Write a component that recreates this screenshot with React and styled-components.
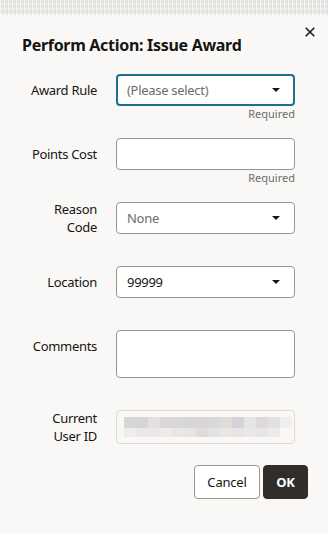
import React from "react";
import styled, { createGlobalStyle } from "styled-components";

const Global = createGlobalStyle`
  html, body { margin: 0; padding: 0; background: #f9f8f6; }
  body { font-family: "Noto Sans", "Open Sans", sans-serif; color: #161513; }
  * { box-sizing: border-box; }
`;

const Backdrop = styled.div`
  height: 15px;
  background-color: #e6e4e1;
  background-image:
    repeating-linear-gradient(90deg, rgba(255,255,255,0.55) 0 1px, transparent 1px 3px, rgba(0,0,0,0.03) 3px 4px),
    repeating-linear-gradient(0deg, rgba(255,255,255,0.35) 0 2px, transparent 2px 5px);
`;

const Dialog = styled.div`
  position: relative;
  background: #f9f8f6;
  padding: 20px 20px 20px 22px;
  min-height: 519px;
`;

const Title = styled.h1`
  margin: 0;
  font-size: 16px;
  line-height: 20px;
  font-weight: 700;
  letter-spacing: -0.3px;
  color: #161513;
`;

const CloseButton = styled.button`
  position: absolute;
  top: 5px;
  right: 6px;
  width: 24px;
  height: 24px;
  border: 0;
  background: transparent;
  padding: 0;
  display: flex;
  align-items: center;
  justify-content: center;
  cursor: pointer;
`;

const Form = styled.div`
  margin-top: 19px;
  display: grid;
  grid-template-columns: 75px 179px;
  column-gap: 19px;
  row-gap: 16px;
`;

const Label = styled.div`
  height: ${(p) => p.$h || 32}px;
  display: flex;
  align-items: center;
  justify-content: flex-end;
  text-align: right;
  font-size: 13px;
  line-height: 18px;
  letter-spacing: -0.3px;
  color: #161513;
`;

const Field = styled.div`
  display: flex;
  flex-direction: column;
`;

const Box = styled.div`
  height: ${(p) => p.$h || 32}px;
  border-radius: 4px;
  background: ${(p) => (p.$disabled ? "transparent" : "#fff")};
  border: ${(p) =>
    p.$focus ? "2px solid #1f6f8e" : p.$disabled ? "1px solid #dfdcd7" : "1px solid #9a9690"};
  display: flex;
  align-items: center;
  padding: 0 ${(p) => (p.$focus ? 13 : 14)}px 0 ${(p) => (p.$focus ? 9 : 10)}px;
  font-size: 13px;
  letter-spacing: -0.3px;
  color: ${(p) => (p.$placeholder ? "#6f6c68" : "#161513")};
`;

const Value = styled.span`
  flex: 1;
`;

const Helper = styled.div`
  height: 16px;
  font-size: 11px;
  line-height: 16px;
  text-align: right;
  color: #6f6c68;
`;

const Mosaic = styled.div`
  display: grid;
  grid-template-columns: repeat(14, 12px);
  grid-template-rows: 11px 9px;
  margin-left: -3px;
`;

const Cell = styled.span`
  background: ${(p) => p.$c};
`;

const Footer = styled.div`
  margin-top: 21px;
  display: flex;
  justify-content: flex-end;
  gap: 3px;
`;

const Button = styled.button`
  height: 34px;
  padding: 0 12px;
  min-width: ${(p) => (p.$primary ? 45 : 66)}px;
  border-radius: 4px;
  font-family: inherit;
  font-size: 13px;
  letter-spacing: -0.2px;
  font-weight: ${(p) => (p.$primary ? 700 : 400)};
  color: ${(p) => (p.$primary ? "#fff" : "#161513")};
  background: ${(p) => (p.$primary ? "#312d2a" : "#fff")};
  border: 1px solid ${(p) => (p.$primary ? "#312d2a" : "#9a9690")};
`;

const Caret = () => (
  <svg width="8" height="4" viewBox="0 0 8 4">
    <path d="M0 0 H8 L4 4 Z" fill="#161513" />
  </svg>
);

const CloseIcon = () => (
  <svg width="10" height="10" viewBox="0 0 10 10">
    <path d="M0.7 0.7 L9.3 9.3 M9.3 0.7 L0.7 9.3" stroke="#161513" strokeWidth="1.5" />
  </svg>
);

const row1 = ["#d8d6d3", "#d6d4d6", "#e3dfdf", "#dad6d5", "#d9d7d7", "#d6d6d5", "#d9d5d4", "#d8d8da", "#dfdcda", "#d6d3d8", "#e6e4e4", "#dcd9d8", "#e2e1e0", "#f0efee"];
const row2 = ["#efedec", "#e9e7e7", "#ebe7e6", "#ecebea", "#e8e7e6", "#e7e5e4", "#dddcda", "#e4e3e4", "#e8e7e6", "#e6e5e4", "#e9e7e8", "#e7e6e6", "#ecebea", "transparent"];

export default function App() {
  return (
    <>
      <Global />
      <Backdrop />
      <Dialog>
        <Title>Perform Action: Issue Award</Title>
        <CloseButton aria-label="Close">
          <CloseIcon />
        </CloseButton>
        <Form>
          <Label>Award Rule</Label>
          <Field>
            <Box $focus $placeholder>
              <Value>(Please select)</Value>
              <Caret />
            </Box>
            <Helper>Required</Helper>
          </Field>

          <Label>Points Cost</Label>
          <Field>
            <Box />
            <Helper>Required</Helper>
          </Field>

          <Label>Reason<br />Code</Label>
          <Field>
            <Box $placeholder>
              <Value>None</Value>
              <Caret />
            </Box>
            <Helper />
          </Field>

          <Label>Location</Label>
          <Field>
            <Box>
              <Value>99999</Value>
              <Caret />
            </Box>
            <Helper />
          </Field>

          <Label>Comments</Label>
          <Field>
            <Box $h={48} />
            <Helper />
          </Field>

          <Label $h={34}>Current<br />User ID</Label>
          <Field>
            <Box $h={34} $disabled>
              <Mosaic>
                {row1.map((c, i) => <Cell key={"a" + i} $c={c} />)}
                {row2.map((c, i) => <Cell key={"b" + i} $c={c} />)}
              </Mosaic>
            </Box>
          </Field>
        </Form>
        <Footer>
          <Button>Cancel</Button>
          <Button $primary>OK</Button>
        </Footer>
      </Dialog>
    </>
  );
}
